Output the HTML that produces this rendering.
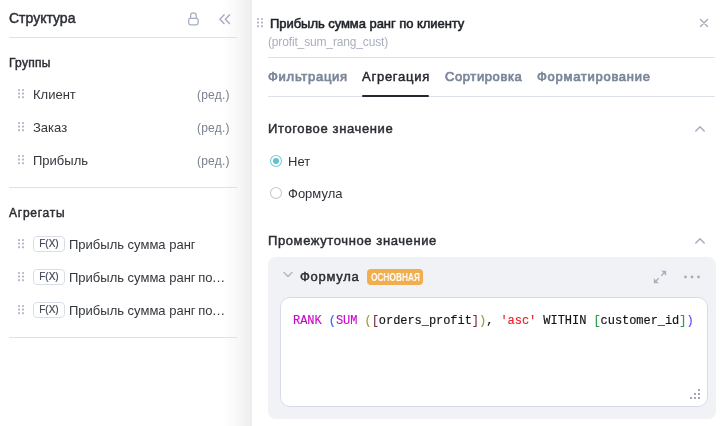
<!DOCTYPE html>
<html><head><meta charset="utf-8">
<style>
*{box-sizing:border-box;margin:0;padding:0}
html,body{width:724px;height:426px;overflow:hidden;background:#fff;font-family:"Liberation Sans",sans-serif;color:#22252b}
.a{position:absolute;white-space:nowrap;line-height:normal}
.b{font-weight:bold}
.sb{-webkit-text-stroke:0.45px currentColor}
.hl{position:absolute;height:1px;background:#dde2ea}
.row{font-size:13px;color:#33363c}
.red{font-size:12px;color:#7a8190;letter-spacing:0.2px}
.fx{position:absolute;width:32px;height:16px;border:1px solid #d9dee6;border-radius:4px;font-size:10px;color:#3f4553;text-align:center;line-height:13px;letter-spacing:0px;-webkit-text-stroke:0.2px currentColor}
.tab{position:absolute;top:68.5px;font-size:13px;-webkit-text-stroke:0.7px currentColor;letter-spacing:0.6px;color:#7a8699}
#ov{position:absolute;left:0;top:0}
.a,.tab,.fx{will-change:transform}
</style></head><body>
<div class="a" style="left:222px;top:0;width:30px;height:426px;background:linear-gradient(to right,rgba(0,0,0,0),rgba(0,0,0,0.02) 40%,rgba(0,0,0,0.07))"></div>
<div class="a" style="left:252px;top:0;width:472px;height:426px;background:#fff"></div>

<div class="a sb" style="left:9px;top:10px;font-size:14px;color:#2a2d33">Структура</div>
<div class="hl" style="left:9px;top:37px;width:228px"></div>
<div class="a sb" style="left:8.5px;top:56px;font-size:12px;color:#2a2d33;letter-spacing:0.3px">Группы</div>

<div class="a row" style="left:33px;top:87px">Клиент</div>
<div class="a red" style="left:196.5px;top:88px">(ред.)</div>
<div class="a row" style="left:33px;top:120px">Заказ</div>
<div class="a red" style="left:196.5px;top:121px">(ред.)</div>
<div class="a row" style="left:33px;top:153px">Прибыль</div>
<div class="a red" style="left:196.5px;top:154px">(ред.)</div>

<div class="hl" style="left:9px;top:187px;width:228px"></div>
<div class="a sb" style="left:9px;top:206px;font-size:12px;color:#2a2d33;letter-spacing:0.75px">Агрегаты</div>

<div class="fx" style="left:33px;top:236px">F(X)</div>
<div class="a row" style="left:69px;top:237px">Прибыль сумма ранг</div>
<div class="fx" style="left:33px;top:269px">F(X)</div>
<div class="a row" style="left:69px;top:270px">Прибыль сумма ранг<span style="word-spacing:-1px"> </span>по<span style="letter-spacing:0.6px">...</span></div>
<div class="fx" style="left:33px;top:302px">F(X)</div>
<div class="a row" style="left:69px;top:303px">Прибыль сумма ранг<span style="word-spacing:-1px"> </span>по<span style="letter-spacing:0.6px">...</span></div>
<div class="hl" style="left:9px;top:337px;width:228px"></div>

<div class="a sb" style="left:270px;top:16px;font-size:13px;color:#1f2227;letter-spacing:-0.05px;-webkit-text-stroke:0.55px currentColor">Прибыль сумма ранг по клиенту</div>
<div class="a" style="left:268px;top:34.5px;font-size:12px;color:#a9b0bd;letter-spacing:-0.15px">(profit_sum_rang_cust)</div>
<div class="hl" style="left:268px;top:57px;width:447px"></div>
<div class="tab" style="left:268px;letter-spacing:0.72px">Фильтрация</div>
<div class="tab" style="left:362px;color:#24272d;letter-spacing:0.75px;-webkit-text-stroke:0.45px currentColor">Агрегация</div>
<div class="tab" style="left:445px">Сортировка</div>
<div class="tab" style="left:537px;letter-spacing:0.72px">Форматирование</div>
<div class="hl" style="left:268px;top:96px;width:447px"></div>
<div class="a" style="left:362px;top:95px;width:67px;height:2px;background:#25272c;border-radius:1px"></div>

<div class="a sb" style="left:268px;top:121px;font-size:13px;color:#2a2d33;letter-spacing:0.63px">Итоговое значение</div>
<div class="a" style="left:288px;top:154px;font-size:13px;color:#2f3238">Нет</div>
<div class="a" style="left:288px;top:186px;font-size:13px;color:#2f3238">Формула</div>
<div class="a sb" style="left:268px;top:233px;font-size:13px;color:#2a2d33;letter-spacing:0.6px">Промежуточное значение</div>

<div class="a" style="left:268px;top:257px;width:448px;height:162px;background:#f1f2f6;border-radius:8px"></div>
<div class="a sb" style="left:300px;top:269px;font-size:13px;color:#2a2d33;letter-spacing:0.7px">Формула</div>
<div class="a" style="left:367px;top:269px;width:56px;height:16px;background:#f0ae4c;border-radius:4px"></div>
<div class="a b" style="left:371px;top:272px;font-size:10px;line-height:12px;color:#fff;transform-origin:0 0;transform:scaleX(0.83)">ОСНОВНАЯ</div>

<div class="a" style="left:280px;top:297px;width:428px;height:110px;background:#fff;border:1px solid #d6dbe4;border-radius:10px"></div>
<div class="a" style="left:293px;top:314px;font-family:'Liberation Mono',monospace;font-size:12px;color:#111318;letter-spacing:-0.05px;-webkit-text-stroke:0.15px currentColor"><span style="color:#c80ac8">RANK</span> <span style="color:#2f66ff">(</span><span style="color:#c80ac8">SUM</span> <span style="color:#9a9e3a">(</span><span style="color:#7a3040">[</span>orders_profit<span style="color:#7a3040">]</span><span style="color:#9a9e3a">)</span>, <span style="color:#f01a24">'asc'</span> WITHIN <span style="color:#2f9a4a">[</span>customer_id<span style="color:#2f9a4a">]</span><span style="color:#5a4cff">)</span></div>

<svg id="ov" width="724" height="426" viewBox="0 0 724 426">
 <g fill="#b3b9ca"><rect x="18" y="89.0" width="2" height="2" rx="0.4"/><rect x="22" y="89.0" width="2" height="2" rx="0.4"/><rect x="18" y="92.6" width="2" height="2" rx="0.4"/><rect x="22" y="92.6" width="2" height="2" rx="0.4"/><rect x="18" y="96.2" width="2" height="2" rx="0.4"/><rect x="22" y="96.2" width="2" height="2" rx="0.4"/><rect x="18" y="122.0" width="2" height="2" rx="0.4"/><rect x="22" y="122.0" width="2" height="2" rx="0.4"/><rect x="18" y="125.6" width="2" height="2" rx="0.4"/><rect x="22" y="125.6" width="2" height="2" rx="0.4"/><rect x="18" y="129.2" width="2" height="2" rx="0.4"/><rect x="22" y="129.2" width="2" height="2" rx="0.4"/><rect x="18" y="155.0" width="2" height="2" rx="0.4"/><rect x="22" y="155.0" width="2" height="2" rx="0.4"/><rect x="18" y="158.6" width="2" height="2" rx="0.4"/><rect x="22" y="158.6" width="2" height="2" rx="0.4"/><rect x="18" y="162.2" width="2" height="2" rx="0.4"/><rect x="22" y="162.2" width="2" height="2" rx="0.4"/><rect x="18" y="239.0" width="2" height="2" rx="0.4"/><rect x="22" y="239.0" width="2" height="2" rx="0.4"/><rect x="18" y="242.6" width="2" height="2" rx="0.4"/><rect x="22" y="242.6" width="2" height="2" rx="0.4"/><rect x="18" y="246.2" width="2" height="2" rx="0.4"/><rect x="22" y="246.2" width="2" height="2" rx="0.4"/><rect x="18" y="272.0" width="2" height="2" rx="0.4"/><rect x="22" y="272.0" width="2" height="2" rx="0.4"/><rect x="18" y="275.6" width="2" height="2" rx="0.4"/><rect x="22" y="275.6" width="2" height="2" rx="0.4"/><rect x="18" y="279.2" width="2" height="2" rx="0.4"/><rect x="22" y="279.2" width="2" height="2" rx="0.4"/><rect x="18" y="305.0" width="2" height="2" rx="0.4"/><rect x="22" y="305.0" width="2" height="2" rx="0.4"/><rect x="18" y="308.6" width="2" height="2" rx="0.4"/><rect x="22" y="308.6" width="2" height="2" rx="0.4"/><rect x="18" y="312.2" width="2" height="2" rx="0.4"/><rect x="22" y="312.2" width="2" height="2" rx="0.4"/><rect x="257" y="18.0" width="2" height="2" rx="0.4"/><rect x="261" y="18.0" width="2" height="2" rx="0.4"/><rect x="257" y="21.6" width="2" height="2" rx="0.4"/><rect x="261" y="21.6" width="2" height="2" rx="0.4"/><rect x="257" y="25.2" width="2" height="2" rx="0.4"/><rect x="261" y="25.2" width="2" height="2" rx="0.4"/></g>
 <g fill="none" stroke="#a7aebf" stroke-width="1.3" stroke-linecap="round" stroke-linejoin="round">
  <path d="M190.6 18.2V15.6a2.8 2.8 0 0 1 5.6 0V18.2"/>
  <rect x="188.7" y="18.4" width="9.4" height="6.4" rx="1.7"/>
  <path d="M224 14.9L219.9 19.2L224 23.4M229.4 14.9L225.3 19.2L229.4 23.4" stroke-width="1.5"/>
  <path d="M700.5 19.5L707.5 26.5M707.5 19.5L700.5 26.5" stroke="#a0a8b8"/>
  <path d="M695.8 131L700 126.8L704.2 131" stroke-width="1.5"/>
  <path d="M695.8 243L700 238.8L704.2 243" stroke-width="1.5"/>
  <path d="M284 272.5L288 276.5L292 272.5" stroke="#aab1c0" stroke-width="1.3"/>
 </g>
 <circle cx="276" cy="161" r="5.5" fill="#fff" stroke="#72cdd2" stroke-width="1.1"/>
 <circle cx="276" cy="161" r="3" fill="#5cc4c9"/>
 <circle cx="276" cy="193" r="5.5" fill="#fff" stroke="#c3c8d6" stroke-width="1.1"/>
 <g fill="#a9b0c2">
  <path d="M666.2 270.8V275.8L661.2 270.8Z"/><path d="M653.8 283.2V278.2L658.8 283.2Z"/>
 </g>
 <path d="M664 273L661.3 275.7M656 281L658.7 278.3" stroke="#a9b0c2" stroke-width="1.3" fill="none"/>
 <g fill="#a4abbb"><circle cx="685.5" cy="277" r="1.4"/><circle cx="692" cy="277" r="1.4"/><circle cx="698.5" cy="277" r="1.4"/></g>
 <g fill="#9ea5b6"><rect x="698" y="389" width="2" height="2"/><rect x="694" y="393" width="2" height="2"/><rect x="698" y="393" width="2" height="2"/><rect x="690" y="397" width="2" height="2"/><rect x="694" y="397" width="2" height="2"/><rect x="698" y="397" width="2" height="2"/></g>
</svg>
</body></html>
